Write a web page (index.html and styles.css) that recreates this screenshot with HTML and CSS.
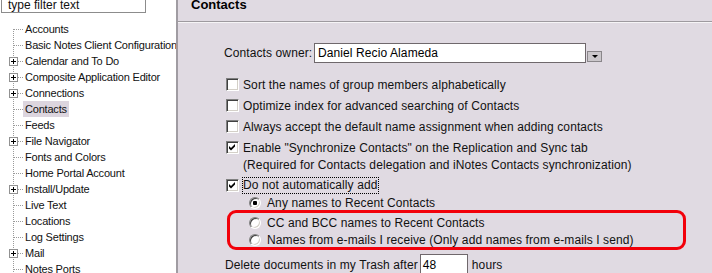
FILE: index.html
```html
<!DOCTYPE html>
<html lang="en">

<head>
  <meta charset="UTF-8">
  <title>Preferences - Contacts</title>
  <link rel="stylesheet" href="styles.css">
</head>

<body>
  <div class="window">
    <!-- left: preference tree -->
    <div class="sidebar">
      <div class="filter">type filter text</div>
      <ul class="tree">
        <li class="node first"><span class="twig"><i class="pad"></i><i class="hline"></i></span><span class="label">Accounts</span></li>
        <li class="node"><span class="twig"><i class="pad"></i><i class="hline"></i></span><span class="label">Basic Notes Client Configuration</span></li>
        <li class="node"><span class="twig"><i class="plus"></i><i class="hline short"></i></span><span class="label">Calendar and To Do</span></li>
        <li class="node"><span class="twig"><i class="plus"></i><i class="hline short"></i></span><span class="label">Composite Application Editor</span></li>
        <li class="node"><span class="twig"><i class="plus"></i><i class="hline short"></i></span><span class="label">Connections</span></li>
        <li class="node"><span class="twig"><i class="pad"></i><i class="hline"></i></span><span class="label selected">Contacts</span></li>
        <li class="node"><span class="twig"><i class="pad"></i><i class="hline"></i></span><span class="label">Feeds</span></li>
        <li class="node"><span class="twig"><i class="plus"></i><i class="hline short"></i></span><span class="label">File Navigator</span></li>
        <li class="node"><span class="twig"><i class="pad"></i><i class="hline"></i></span><span class="label">Fonts and Colors</span></li>
        <li class="node"><span class="twig"><i class="pad"></i><i class="hline"></i></span><span class="label">Home Portal Account</span></li>
        <li class="node"><span class="twig"><i class="plus"></i><i class="hline short"></i></span><span class="label">Install/Update</span></li>
        <li class="node"><span class="twig"><i class="pad"></i><i class="hline"></i></span><span class="label">Live Text</span></li>
        <li class="node"><span class="twig"><i class="pad"></i><i class="hline"></i></span><span class="label">Locations</span></li>
        <li class="node"><span class="twig"><i class="pad"></i><i class="hline"></i></span><span class="label">Log Settings</span></li>
        <li class="node"><span class="twig"><i class="plus"></i><i class="hline short"></i></span><span class="label">Mail</span></li>
        <li class="node"><span class="twig"><i class="pad"></i><i class="hline"></i></span><span class="label">Notes Ports</span></li>
      </ul>
    </div>

    <!-- right: Contacts page -->
    <div class="page">
      <div class="page-title"><span>Contacts</span></div>

      <div class="form">
        <div class="owner-row">
          <span class="owner-label">Contacts owner:</span>
          <span class="owner-input">Daniel Recio Alameda</span>
          <span class="dropdown"><i class="arrow"></i></span>
        </div>

        <div class="check-row first-check"><span class="box"></span><span>Sort the names of group members alphabetically</span></div>
        <div class="check-row"><span class="box"></span><span>Optimize index for advanced searching of Contacts</span></div>
        <div class="check-row"><span class="box"></span><span>Always accept the default name assignment when adding contacts</span></div>
        <div class="check-row"><span class="box checked"><svg width="9" height="9" viewBox="0 0 9 9"><path d="M1 3 L3 5 L7 1 L7 3.5 L3 7.5 L1 5.5 Z" fill="#000"/></svg></span><span>Enable "Synchronize Contacts" on the Replication and Sync tab</span></div>
        <div class="note">(Required for Contacts delegation and iNotes Contacts synchronization)</div>
        <div class="check-row focus-row"><span class="box checked"><svg width="9" height="9" viewBox="0 0 9 9"><path d="M1 3 L3 5 L7 1 L7 3.5 L3 7.5 L1 5.5 Z" fill="#000"/></svg></span><span class="focus">Do not automatically add</span></div>

        <div class="radio-row any"><span class="radio on"></span><span>Any names to Recent Contacts</span></div>
        <div class="callout">
          <div class="radio-row cc"><span class="radio"></span><span>CC and BCC names to Recent Contacts</span></div>
          <div class="radio-row names"><span class="radio"></span><span>Names from e-mails I receive (Only add names from e-mails I send)</span></div>
        </div>

        <div class="trash-row">
          <span>Delete documents in my Trash after</span>
          <span class="days">48</span>
          <span>hours</span>
        </div>
      </div>
    </div>
  </div>
</body>

</html>
```

FILE: styles.css
```css
/* reset */
* {
  margin: 0;
  padding: 0;
  box-sizing: border-box;
}

body {
  width: 712px;
  height: 273px;
  overflow: hidden;
  font-family: "Liberation Sans", Arial, sans-serif;
  color: #111;
}

.window {
  display: flex;
  height: 273px;
}

/* ---- left tree ---- */
.sidebar {
  width: 178px;
  flex: none;
  overflow: hidden;
  background: #fff;
  border-right: 2px solid #a09ca2;
}

.filter {
  width: 145px;
  height: 13px;
  margin-left: 1px;
  border: 1px solid #8c8c8c;
  border-top: 0;
  padding-left: 6px;
  font-size: 12px;
  line-height: 10px;
  overflow: hidden;
}

.tree {
  list-style: none;
  margin-top: 8px;
  font-size: 11px;
  letter-spacing: -0.2px;
}

.node {
  display: flex;
  align-items: center;
  height: 16px;
  white-space: nowrap;
}

/* dotted connector lines */
.twig {
  display: flex;
  align-items: center;
  width: 23px;
  height: 16px;
  flex: none;
  background-image: repeating-linear-gradient(to bottom, #9a9a9a 0 1px, transparent 1px 2px);
  background-size: 1px 100%;
  background-position: 13px 0;
  background-repeat: no-repeat;
}

.first .twig {
  background-size: 1px 8px;
  background-position: 13px 8px;
}

.pad {
  width: 14px;
}

.hline {
  width: 9px;
  height: 1px;
  background-image: repeating-linear-gradient(to right, #9a9a9a 0 1px, transparent 1px 2px);
}

.hline.short {
  width: 5px;
}

/* expand box */
.plus {
  width: 9px;
  height: 9px;
  margin-left: 9px;
  border: 1px solid #919191;
  background:
    linear-gradient(#000, #000) center / 5px 1px no-repeat,
    linear-gradient(#000, #000) center / 1px 5px no-repeat,
    #fff;
}

.label {
  padding: 0 2px;
  line-height: 16px;
}

.selected {
  background: #dcd5de;
}

/* ---- right page ---- */
.page {
  flex: 1;
  background: #e0dae2;
}

.page-title {
  height: 22px;
  padding-left: 13px;
  border-bottom: 1px solid #9e9a9f;
  box-shadow: 0 1px 0 #f6f4f6;
  overflow: hidden;
}

.page-title span {
  display: block;
  margin-top: -3px;
  font-size: 13px;
  font-weight: bold;
  line-height: 15px;
  color: #000;
}

.form {
  padding: 21px 0 0 46px;
  font-size: 12px;
  letter-spacing: 0.1px;
}

.owner-row {
  display: flex;
  align-items: flex-start;
  height: 20px;
}

.owner-label {
  line-height: 20px;
  width: 90px;
}

.owner-input {
  width: 272px;
  height: 20px;
  padding-left: 3px;
  border: 1px solid #6f686c;
  background: #fff;
  line-height: 18px;
  color: #000;
}

.dropdown {
  display: flex;
  align-items: center;
  justify-content: center;
  width: 15px;
  height: 11px;
  margin: 8px 0 0 1px;
  background: #cbc7cb;
  border: 1px solid #8a868a;
}

.arrow {
  border-left: 3px solid transparent;
  border-right: 3px solid transparent;
  border-top: 3px solid #000;
}

/* checkboxes */
.check-row {
  display: flex;
  align-items: center;
  height: 21px;
}

.first-check {
  margin-top: 11px;
}

.box {
  display: flex;
  align-items: center;
  justify-content: center;
  width: 13px;
  height: 13px;
  margin: 0 4px 0 2px;
  flex: none;
  background: #fff;
  border: 1px solid;
  border-color: #808080 #fff #fff #808080;
  box-shadow: inset 1px 1px 0 #404040, inset -1px -1px 0 #d4d0c8;
}

.note {
  height: 15px;
  line-height: 15px;
  margin-left: 19px;
}

.focus-row {
  height: 19px;
  margin-top: 3px;
}

.focus-row .box {
  margin-right: 3px;
}

.focus {
  border: 1px dotted #000;
  line-height: 15px;
  padding-right: 1px;
}

/* radios */
.radio-row {
  display: flex;
  align-items: center;
}

.any {
  height: 15px;
  padding-left: 25px;
}

.radio {
  width: 12px;
  height: 12px;
  margin-right: 6px;
  flex: none;
  border-radius: 50%;
  background: #fff;
  border: 1px solid;
  border-color: #808080 #fff #fff #808080;
  box-shadow: inset 1px 1px 0 #404040, inset -1px -1px 0 #d4d0c8;
}

.radio.on {
  background: radial-gradient(circle, #000 0 2px, #fff 2.5px);
}

/* red highlight box */
.callout {
  width: 459px;
  margin-left: 3px;
  border: 3px solid #f2000a;
  border-radius: 9px;
}

.callout .radio-row {
  padding-left: 19px;
}

.cc {
  height: 19px;
}

.names {
  height: 15px;
}

.trash-row {
  display: flex;
  align-items: center;
  height: 22px;
  margin: 4px 0 0 1px;
}

.days {
  width: 48px;
  height: 22px;
  margin: 0 4px 0 2px;
  padding-left: 2px;
  border: 1px solid #6f686c;
  background: #fff;
  line-height: 20px;
  color: #000;
}
```
